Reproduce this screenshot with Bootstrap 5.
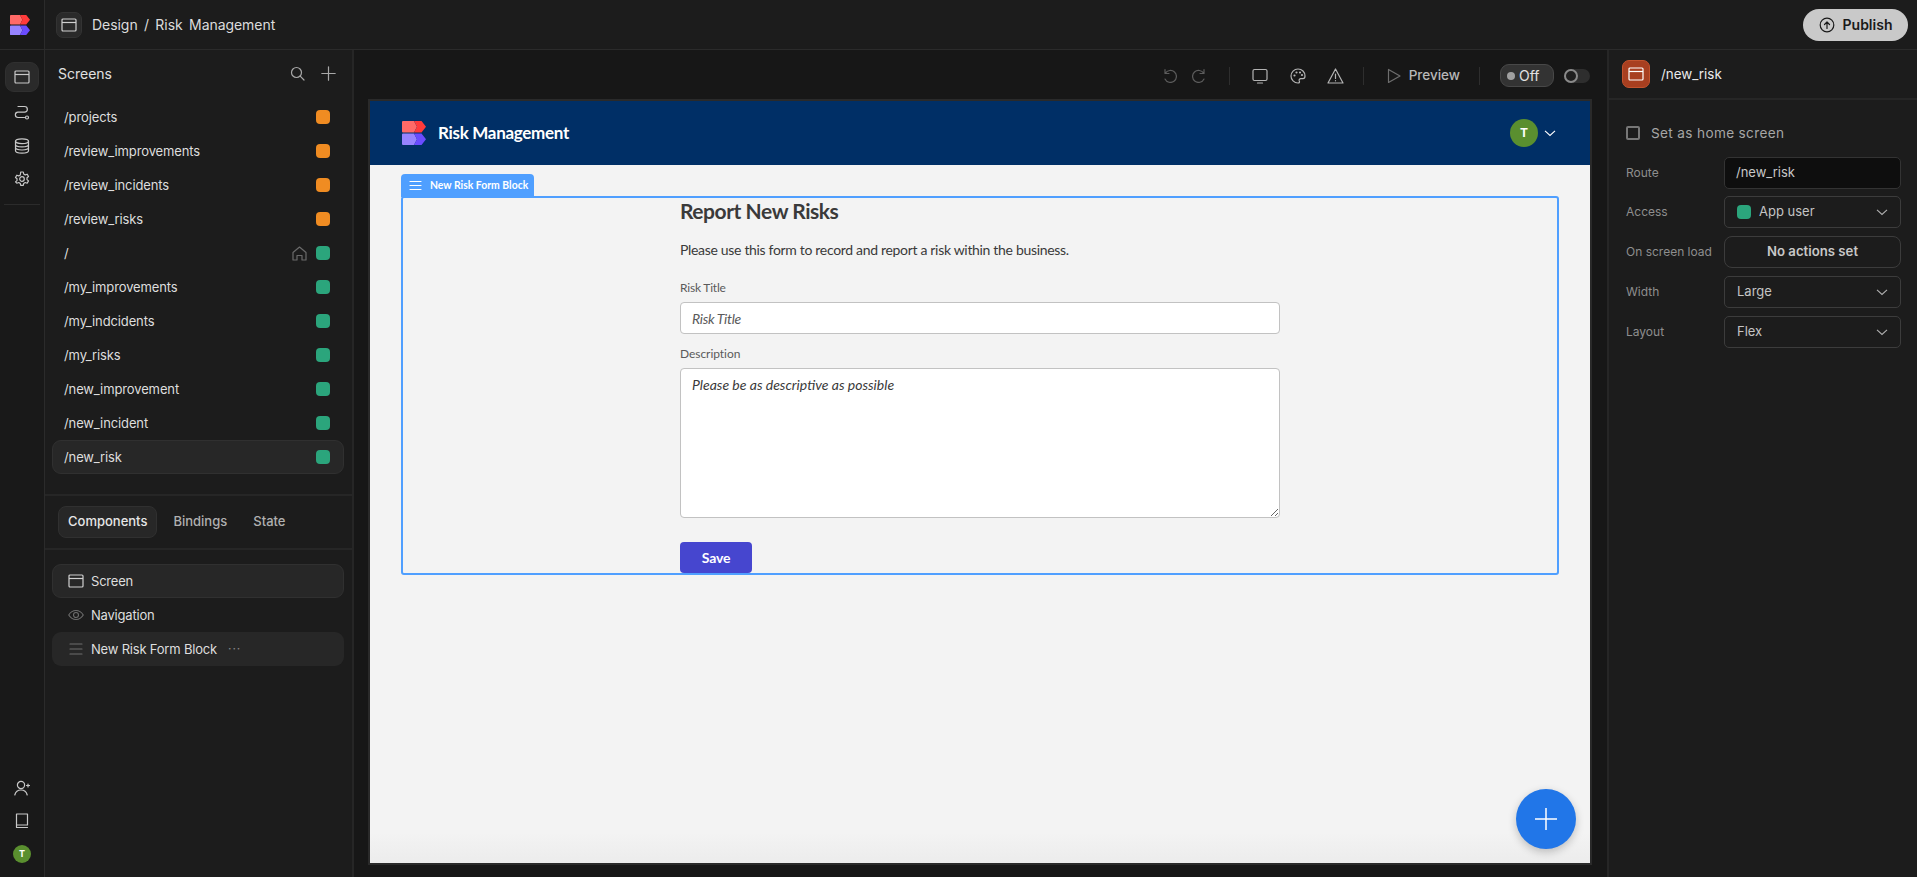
<!DOCTYPE html>
<html lang="en"><head><meta charset="utf-8"><title>Risk Management</title>
<link href="https://cdn.jsdelivr.net/npm/bootstrap@5.3.0/dist/css/bootstrap.min.css" rel="stylesheet">
<style>
html,body{height:877px;overflow:hidden}
body{background:#1c1c1c;color:#e4e4e4;font-family:Inter,"Liberation Sans",sans-serif;font-size:13px}
svg{display:block;flex:none}
.ic{fill:none;stroke:currentColor;stroke-width:1.2;stroke-linecap:round;stroke-linejoin:round}
.rail{width:45px;background:#191919;border-right:1px solid #2b2b2b}
.rail-logo{height:50px;border-bottom:1px solid #2b2b2b;padding-right:4px}
.rail-btn{width:34px;height:30px;color:#c8c8c8;border:1px solid transparent;border-radius:9px}
.rail-on{background:#2a2a2a;border-color:#303030}
.rail-plain{height:33px;color:#c8c8c8}
.rail-rule{height:1px;background:#2b2b2b;margin:9px 4px 0}
.rail-foot{padding-bottom:14px}
.rail-ava{width:18px;height:18px;border-radius:50%;background:#5a8f2f;color:#fff;font-size:9px;font-weight:700}
.topbar{height:50px;border-bottom:1px solid #2b2b2b;padding:0 9px 0 11px}
.crumb-box{width:26px;height:26px;background:#2a2a2a;border:1px solid #333;border-radius:7px;color:#d0d0d0}
.crumb{font-size:14px;color:#dcdcdc;margin-left:10px;letter-spacing:-.05px;word-spacing:2.5px}
.pub{height:32px;width:105px;background:#c9c9c9;border-radius:16px;color:#1a1a1a;font-weight:600;font-size:14px}
.side{width:309px;border-right:2px solid #262626;background:#1c1c1c}
.side-head{height:48px;padding:0 16px 2px 13px;color:#e0e0e0;margin-bottom:2px;font-size:14px}
.side-icons{color:#a8a8a8}
.scr{height:34px;padding:0 13px 0 11px;margin:0 8px 0 7px;border:1px solid transparent;border-radius:9px;color:#dedede;font-size:13px;letter-spacing:-.12px}
.scr-name{padding-top:2px}
.scr-on{background:#272727;border-color:#303030}
.dot{width:14px;height:14px;border-radius:4px}
.dot-o{background:#f08c22}.dot-g{background:#2ba57c}
.scr-home{color:#6a6a6a;margin-right:9px}
.rule2{height:2px;background:#262626}
.rule-top{margin-top:20px}
.tabs{height:52px;padding:0 13px;gap:6px}
.tabx{font-weight:500;font-size:13px;color:#b0b0b0;height:32px;padding:0 9px;border:1px solid transparent;border-radius:8px}
.tab-on{background:#272727;border-color:#303030;color:#e6e6e6}
.tree{padding-top:14px}
.tree-r{height:34px;margin:0 8px 0 7px;padding:0 15px;gap:7px;border:1px solid transparent;border-radius:9px;color:#dedede;font-size:13px;letter-spacing:-.2px}
.tree-t{padding-top:2px}
.tree-a{background:#272727;border-color:#303030}
.tree-b{background:#272727}
.tree-ic{color:#6e6e6e;width:16px}
.tree-w{color:#d0d0d0}
.more{margin-left:4px;color:#8a8a8a;letter-spacing:1px;font-size:12px}
.canvas-col{background:#171717;min-width:0}
.toolbar{height:51px;padding:0 17px 0 0;color:#6e6e6e;justify-content:flex-end}
.tb-sep{width:1px;height:18px;background:#2e2e2e}
.tb-sep1{margin:0 11px 0 14px}
.tb-ic{width:38px;color:#b4b4b4}
.tb-dim{color:#5c5c5c;width:30px}
.prev{color:#b8b8b8;font-weight:500;font-size:13.5px;gap:8px;padding:0 19px 0 23px}
.prev svg{color:#6e6e6e}
.off{width:54px;height:23px;border:1px solid #484848;background:#333;border-radius:9px;color:#e2e2e2;font-size:14px;margin-left:20px;padding-left:6px;gap:4px}
.off i{width:8px;height:8px;border-radius:50%;background:#a0a0a0;display:block}
.tog{width:26px;height:14px;background:#2e2e2e;border-radius:7px;margin-left:10px}
.tog i{width:14px;height:14px;border-radius:50%;border:2px solid #8a8a8a;background:#1f1f1f;display:block}
.stage{margin:0 17px 14px 16px;height:762px;outline:2px solid #2a2a2a;background:linear-gradient(#f3f3f3 96%,#ececec);color:#3a3a3a;font-family:Lato,"Noto Sans",sans-serif}
.app-nav{height:64px;background:#002f66;padding:0 34px 0 32px;color:#fff}
.app-title{font-size:17px;font-weight:700;letter-spacing:-.3px;margin-left:12px}
.app-ava{width:28px;height:28px;border-radius:50%;background:#5a8f2f;font-family:Inter,sans-serif;font-weight:700;font-size:12px}
.app-chev{margin-left:6px}
.block{margin:31px 31px 0;position:relative;height:379px;border:2px solid #4f9fff;border-radius:3px}
.block-tag{position:absolute;left:-2px;top:-24px;height:23px;width:133px;background:#4f9fff;border-radius:4px 4px 0 0;color:#fff;font-size:10.4px;font-weight:700;padding-left:8px;gap:8px}
.form-w{width:600px;margin-left:277px}
.f-h{font-size:21px;font-weight:700;margin:0;line-height:26px;letter-spacing:-.45px}
.f-p{font-size:14px;margin:16px 0 0;line-height:20px;letter-spacing:-.32px}
.f-l{font-size:12px;color:#5a5a5a;line-height:16px;letter-spacing:-.2px}
.f-l1{margin:20px 0 0}
.f-l2{margin:12px 0 0;letter-spacing:-.05px}
.f-i.form-control{height:32px;margin-top:6px;font-size:14px;font-style:italic;padding:0 11px;border:1px solid #c2c2c2;border-radius:4px;letter-spacing:-.32px;font-family:inherit}
.f-i::placeholder{color:#5a5a5a;opacity:1}
textarea.f-i.form-control{height:150px;padding:8px 11px;line-height:16px;resize:vertical;letter-spacing:0}
textarea.f-i::placeholder{color:#3a3a3a}
.f-save.btn{display:block;width:72px;height:31px;background:#4646cf;border:0;border-radius:4px;color:#fff;font-weight:700;font-size:14px;padding:0;margin-top:24px;letter-spacing:-.2px;font-family:inherit}
.fab{position:absolute;right:14px;bottom:14px;width:60px;height:60px;border-radius:50%;background:#2176e8;box-shadow:0 3px 8px rgba(0,0,0,.22);color:#fff}
.right{width:310px;border-left:2px solid #262626;background:#1c1c1c}
.r-head{height:50px;padding:0 13px;border-bottom:2px solid #262626;color:#eaeaea;font-size:13.4px}
.r-ic{width:28px;height:28px;border-radius:7px;background:#a83f20;color:#fff;border:1px solid #c2532e;margin-right:11px}
.r-body{padding:23px 15px 0 17px}
.chk{width:14px;height:14px;border:2px solid #777;border-radius:2px}
.chk-row{color:#a6a6a6;letter-spacing:.35px;gap:11px;height:20px;margin-bottom:14px;font-size:13.6px}
.prop{height:32px;margin-bottom:8px;color:#8e8e8e;font-size:12px}
.prop-first{margin-bottom:7px}
.prop-l{width:98px}
.fld{width:177px;height:32px;border:1px solid #3c3c3c;border-radius:5px;color:#c4c4c4;padding:0 12px;font-size:13px}
.fld-dark{background:#0e0e0e;border-color:#333;color:#c8c8c8;padding-left:11px}
.fld-act{border-radius:8px;font-weight:600;justify-content:center;color:#c8c8c8;font-size:13.2px}
.fld svg{color:#b0b0b0}
</style></head><body>
<svg width="0" height="0" class="position-absolute"><defs>
<symbol id="win" viewBox="0 0 16 16"><rect x="1" y="2" width="14" height="12" rx="1" fill="none" stroke="currentColor" stroke-width="1.2"/><path d="M1 5.500h14" stroke="currentColor" stroke-width="1.2"/></symbol>
<symbol id="chev" viewBox="0 0 12 12"><path d="M1 3.800l5 4.600 5-4.600" fill="none" stroke="currentColor" stroke-width="1.1"/></symbol>
<symbol id="bb" viewBox="0 0 24 24"><path d="M1 0h11l3 5.750-3 5.750H1a1 1 0 0 1-1-1V1a1 1 0 0 1 1-1z" fill="#ff6a67"/><path d="M12 0h7.500L24 5.750 19.500 11.500H12l3-5.750z" fill="#ff3b3b"/><path d="M1 12.500h11l3 5.750-3 5.750H1a1 1 0 0 1-1-1V13.500a1 1 0 0 1 1-1z" fill="#9683ff"/><path d="M12 12.500h7.500l4.500 5.750-4.500 5.750H12l3-5.750z" fill="#6a4cff"/></symbol>
</defs></svg>
<div class="d-flex h-100">
 <div class="rail d-flex flex-column flex-shrink-0">
  <div class="rail-logo d-flex align-items-center justify-content-center"><svg width="20" height="20"><use href="#bb"/></svg></div>
  <div class="d-flex flex-column align-items-center pt-2 px-1">
   <div class="rail-btn rail-on mt-1 d-flex align-items-center justify-content-center"><svg width="16" height="16"><use href="#win"/></svg></div>
   <div class="rail-plain mt-1 d-flex align-items-center"><svg class="ic" width="16" height="16" viewBox="0 0 16 16"><path d="M4 1.500h6.500a2.800 2.800 0 0 1 0 5.700H4a2.600 2.600 0 0 0 0 5.300h6.500"/><circle cx="13" cy="12.500" r="1.500"/></svg></div>
   <div class="rail-plain d-flex align-items-center"><svg class="ic" width="16" height="16" viewBox="0 0 16 16"><ellipse cx="8" cy="3.200" rx="6.500" ry="2.400"/><path d="M1.500 3.200v9.500c0 1.300 2.900 2.400 6.500 2.400s6.500-1.100 6.500-2.400V3.200M1.500 6.400c0 1.300 2.900 2.400 6.500 2.400s6.500-1.100 6.500-2.400M1.500 9.600c0 1.300 2.900 2.400 6.500 2.400s6.500-1.100 6.500-2.400"/></svg></div>
   <div class="rail-plain d-flex align-items-center"><svg class="ic" width="16" height="16" viewBox="0 0 16 16"><circle cx="8" cy="8" r="2.300"/><path d="M6.700 1h2.600l.4 2 1.500.9 2-.7 1.300 2.300-1.500 1.300v1.800l1.500 1.300-1.300 2.300-2-.7-1.500.9-.4 2H6.700l-.4-2-1.500-.9-2 .7L1.500 10.900 3 9.600V7.800L1.500 6.500 2.800 4.200l2 .7 1.500-.9z"/></svg></div>
  </div>
  <div class="rail-rule"></div>
  <div class="mt-auto d-flex flex-column align-items-center rail-foot">
   <div class="rail-plain d-flex align-items-center"><svg class="ic" width="16" height="16" viewBox="0 0 16 16"><circle cx="7" cy="5" r="3.600"/><path d="M.8 15c.8-3.400 3-5 6.200-5s5.400 1.600 6.200 5M12.500 5.500h3M14 4v3"/></svg></div>
   <div class="rail-plain d-flex align-items-center"><svg class="ic" width="14" height="16" viewBox="0 0 14 16"><path d="M1.500 1h11v11h-11zM1.500 1v13.500h11M1.500 12.800v.7"/></svg></div>
   <div class="rail-ava mt-2 d-flex align-items-center justify-content-center">T</div>
  </div>
 </div>
 <div class="d-flex flex-column flex-grow-1" style="min-width:0">
  <div class="topbar d-flex align-items-center">
   <div class="crumb-box d-flex align-items-center justify-content-center"><svg width="16" height="16"><use href="#win"/></svg></div>
   <div class="crumb">Design / Risk Management</div>
   <div class="pub ms-auto d-flex align-items-center justify-content-center gap-2"><svg class="ic" width="16" height="16" viewBox="0 0 16 16"><circle cx="8" cy="8" r="6.800"/><path d="M8 11.500V5M5.500 7.500L8 5l2.500 2.500"/></svg>Publish</div>
  </div>
  <div class="d-flex flex-grow-1" style="min-height:0">
   <div class="side flex-shrink-0">
    <div class="side-head d-flex align-items-center justify-content-between"><span>Screens</span>
     <span class="side-icons d-flex align-items-center gap-3"><svg class="ic" width="15" height="15" viewBox="0 0 15 15"><circle cx="6.500" cy="6.500" r="5"/><path d="M10.200 10.200L14 14"/></svg><svg class="ic" width="15" height="15" viewBox="0 0 15 15"><path d="M7.500.8v13.400M.8 7.500h13.400"/></svg></span></div>
    <div class="scr d-flex align-items-center"><span class="scr-name me-auto">/projects</span><span class="dot dot-o"></span></div>
    <div class="scr d-flex align-items-center"><span class="scr-name me-auto">/review_improvements</span><span class="dot dot-o"></span></div>
    <div class="scr d-flex align-items-center"><span class="scr-name me-auto">/review_incidents</span><span class="dot dot-o"></span></div>
    <div class="scr d-flex align-items-center"><span class="scr-name me-auto">/review_risks</span><span class="dot dot-o"></span></div>
    <div class="scr d-flex align-items-center"><span class="scr-name me-auto">/</span><svg class="ic scr-home" width="15" height="15" viewBox="0 0 15 15"><path d="M1 6.500L7.500 1 14 6.500V14h-4V9.500H5V14H1z"/></svg><span class="dot dot-g"></span></div>
    <div class="scr d-flex align-items-center"><span class="scr-name me-auto">/my_improvements</span><span class="dot dot-g"></span></div>
    <div class="scr d-flex align-items-center"><span class="scr-name me-auto">/my_indcidents</span><span class="dot dot-g"></span></div>
    <div class="scr d-flex align-items-center"><span class="scr-name me-auto">/my_risks</span><span class="dot dot-g"></span></div>
    <div class="scr d-flex align-items-center"><span class="scr-name me-auto">/new_improvement</span><span class="dot dot-g"></span></div>
    <div class="scr d-flex align-items-center"><span class="scr-name me-auto">/new_incident</span><span class="dot dot-g"></span></div>
    <div class="scr scr-on d-flex align-items-center"><span class="scr-name me-auto">/new_risk</span><span class="dot dot-g"></span></div>
    <div class="rule2 rule-top"></div>
    <div class="tabs d-flex align-items-center"><span class="tabx tab-on d-flex align-items-center">Components</span><span class="tabx d-flex align-items-center">Bindings</span><span class="tabx d-flex align-items-center">State</span></div>
    <div class="rule2"></div>
    <div class="tree">
     <div class="tree-r tree-a d-flex align-items-center"><svg class="tree-w" width="16" height="16"><use href="#win"/></svg><span class="tree-t">Screen</span></div>
     <div class="tree-r d-flex align-items-center"><svg class="ic tree-ic" width="16" height="16" viewBox="0 0 18 16"><path d="M.8 8C3 4.500 5.800 3 9 3s6 1.500 8.200 5C15 11.500 12.200 13 9 13S3 11.500.8 8z"/><circle cx="9" cy="8" r="2.800"/></svg><span class="tree-t">Navigation</span></div>
     <div class="tree-r tree-b d-flex align-items-center"><svg class="ic tree-ic" width="16" height="16" viewBox="0 0 16 16"><path d="M2 3h12M2 8h12M2 13h12"/></svg><span class="tree-t">New Risk Form Block</span><span class="more">···</span></div>
    </div>
   </div>
   <div class="canvas-col flex-grow-1 d-flex flex-column">
    <div class="toolbar d-flex align-items-center">
     <span class="tb-dim d-flex justify-content-center"><svg class="ic" width="15" height="15" viewBox="0 0 15 15"><path d="M3 1.500v4h4M3.300 5.300A6 6 0 1 1 3 11"/></svg></span>
     <span class="tb-dim d-flex justify-content-center"><svg class="ic" width="15" height="15" viewBox="0 0 15 15"><path d="M12 1.500v4H8M11.700 5.300A6 6 0 1 0 12 11"/></svg></span>
     <span class="tb-sep tb-sep1"></span>
     <span class="tb-ic d-flex justify-content-center"><svg class="ic" width="16" height="16" viewBox="0 0 16 16"><rect x="1" y="1.500" width="14" height="11" rx="1.500"/><path d="M5.500 15h5"/></svg></span>
     <span class="tb-ic d-flex justify-content-center"><svg class="ic" width="16" height="16" viewBox="0 0 16 16"><path d="M8 1a7 7 0 0 0 0 14c1.500 0 1.800-1 1.300-2-.6-1.300.2-2.300 1.500-2.300H13c1.300 0 2-1 2-2.700C15 4 12 1 8 1z"/><circle cx="4.500" cy="7.500" r=".5"/><circle cx="6.500" cy="4.500" r=".5"/><circle cx="10" cy="4.500" r=".5"/><circle cx="12" cy="7" r=".5"/></svg></span>
     <span class="tb-ic d-flex justify-content-center"><svg class="ic" width="17" height="16" viewBox="0 0 17 16"><path d="M8.500 1L16 15H1zM8.500 6v4.500M8.500 12.500v.3"/></svg></span>
     <span class="tb-sep ms-2"></span>
     <span class="prev d-flex align-items-center"><svg class="ic" width="14" height="16" viewBox="0 0 14 16"><path d="M1.500 1.500v13L13 8z"/></svg>Preview</span>
     <span class="tb-sep"></span>
     <span class="off d-flex align-items-center"><i></i>Off</span>
     <span class="tog d-flex"><i></i></span>
    </div>
    <div class="stage position-relative d-flex flex-column">
     <div class="app-nav d-flex align-items-center flex-shrink-0"><svg width="24" height="24"><use href="#bb"/></svg><span class="app-title me-auto">Risk Management</span><span class="app-ava d-flex align-items-center justify-content-center">T</span><svg class="app-chev" width="12" height="12"><use href="#chev"/></svg></div>
     <div class="block">
      <div class="block-tag d-flex align-items-center"><svg class="ic" width="13" height="13" viewBox="0 0 13 13"><path d="M1 2.500h11M1 6.500h11M1 10.500h11"/></svg>New Risk Form Block</div>
      <div class="form-w">
       <h1 class="f-h">Report New Risks</h1>
       <p class="f-p">Please use this form to record and report a risk within the business.</p>
       <p class="f-l f-l1">Risk Title</p>
       <input class="form-control f-i" placeholder="Risk Title">
       <p class="f-l f-l2">Description</p>
       <textarea class="form-control f-i" placeholder="Please be as descriptive as possible"></textarea>
       <button class="btn f-save">Save</button>
      </div>
     </div>
     <div class="fab d-flex align-items-center justify-content-center"><svg width="22" height="22" viewBox="0 0 22 22"><path d="M11 0v22M0 11h22" stroke="#fff" stroke-width="1.500"/></svg></div>
    </div>
   </div>
   <div class="right flex-shrink-0">
    <div class="r-head d-flex align-items-center"><span class="r-ic d-flex align-items-center justify-content-center"><svg width="16" height="16"><use href="#win"/></svg></span>/new_risk</div>
    <div class="r-body">
     <div class="chk-row d-flex align-items-center"><span class="chk"></span>Set as home screen</div>
     <div class="prop prop-first d-flex align-items-center"><span class="prop-l">Route</span><div class="fld fld-dark d-flex align-items-center">/new_risk</div></div>
     <div class="prop d-flex align-items-center"><span class="prop-l">Access</span><div class="fld d-flex align-items-center"><span class="dot dot-g me-2"></span>App user<svg class="ms-auto" width="12" height="12"><use href="#chev"/></svg></div></div>
     <div class="prop d-flex align-items-center"><span class="prop-l">On screen load</span><div class="fld fld-act d-flex align-items-center">No actions set</div></div>
     <div class="prop d-flex align-items-center"><span class="prop-l">Width</span><div class="fld d-flex align-items-center">Large<svg class="ms-auto" width="12" height="12"><use href="#chev"/></svg></div></div>
     <div class="prop d-flex align-items-center"><span class="prop-l">Layout</span><div class="fld d-flex align-items-center">Flex<svg class="ms-auto" width="12" height="12"><use href="#chev"/></svg></div></div>
    </div>
   </div>
  </div>
 </div>
</div>
<script src="https://cdn.jsdelivr.net/npm/bootstrap@5.3.0/dist/js/bootstrap.bundle.min.js"></script>
</body></html>
